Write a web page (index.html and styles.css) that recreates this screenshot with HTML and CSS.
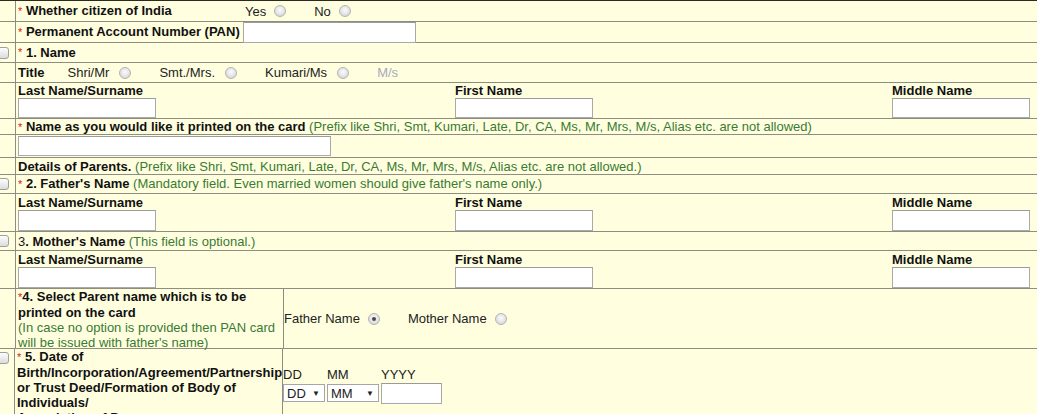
FILE: index.html
```html
<!DOCTYPE html>
<html>
<head>
<meta charset="utf-8">
<link rel="stylesheet" href="styles.css">
</head>
<body>
<div class="form">
  <div class="row r1">
    <div class="side"></div>
    <div class="main">
      <div class="lbl"><span class="req">*</span> <b>Whether citizen of India</b></div>
      <div class="opts">Yes<span class="radio"></span>No<span class="radio"></span></div>
    </div>
  </div>
  <div class="row r2">
    <div class="side"></div>
    <div class="main">
      <div class="lbl"><span class="req">*</span> <b>Permanent Account Number (PAN)</b></div>
      <input class="txt pan" type="text">
    </div>
  </div>
  <div class="row r3">
    <div class="side"><span class="chk"></span></div>
    <div class="main"><span class="req">*</span>&nbsp;<b>1. Name</b></div>
  </div>
  <div class="row r4">
    <div class="side"></div>
    <div class="main">
      <b class="title">Title</b>
      <span class="opt first">Shri/Mr</span><span class="radio"></span>
      <span class="opt">Smt./Mrs.</span><span class="radio"></span>
      <span class="opt">Kumari/Ms</span><span class="radio"></span>
      <span class="opt dis">M/s</span>
    </div>
  </div>
  <div class="row r5">
    <div class="side"></div>
    <div class="main names">
      <div class="nm"><b>Last Name/Surname</b><input class="txt nmi" type="text"></div>
      <div class="nm"><b>First Name</b><input class="txt nmi" type="text"></div>
      <div class="nm"><b>Middle Name</b><input class="txt nmi" type="text"></div>
    </div>
  </div>
  <div class="row r6">
    <div class="side"></div>
    <div class="main"><span><span class="req">*</span> <b>Name as you would like it printed on the card</b> <span class="note">(Prefix like Shri, Smt, Kumari, Late, Dr, CA, Ms, Mr, Mrs, M/s, Alias etc. are not allowed)</span></span></div>
  </div>
  <div class="row r7">
    <div class="side"></div>
    <div class="main"><input class="txt card" type="text"></div>
  </div>
  <div class="row r8">
    <div class="side"></div>
    <div class="main"><span><b>Details of Parents.</b> <span class="note">(Prefix like Shri, Smt, Kumari, Late, Dr, CA, Ms, Mr, Mrs, M/s, Alias etc. are not allowed.)</span></span></div>
  </div>
  <div class="row r9">
    <div class="side"><span class="chk"></span></div>
    <div class="main"><span><span class="req">*</span> <b>2. Father's Name</b> <span class="note">(Mandatory field. Even married women should give father's name only.)</span></span></div>
  </div>
  <div class="row r10">
    <div class="side"></div>
    <div class="main names">
      <div class="nm"><b>Last Name/Surname</b><input class="txt nmi" type="text"></div>
      <div class="nm"><b>First Name</b><input class="txt nmi" type="text"></div>
      <div class="nm"><b>Middle Name</b><input class="txt nmi" type="text"></div>
    </div>
  </div>
  <div class="row r11">
    <div class="side"><span class="chk"></span></div>
    <div class="main"><span>3<b>. Mother's Name</b> <span class="note">(This field is optional.)</span></span></div>
  </div>
  <div class="row r12">
    <div class="side"></div>
    <div class="main names">
      <div class="nm"><b>Last Name/Surname</b><input class="txt nmi" type="text"></div>
      <div class="nm"><b>First Name</b><input class="txt nmi" type="text"></div>
      <div class="nm"><b>Middle Name</b><input class="txt nmi" type="text"></div>
    </div>
  </div>
  <div class="row r13">
    <div class="side"></div>
    <div class="left"><span class="req">*</span><b>4. Select Parent name which is to be<br>printed on the card</b><br><span class="note">(In case no option is provided then PAN card<br>will be issued with father's name)</span></div>
    <div class="right">
      <span class="opt">Father Name</span><span class="radio on"></span>
      <span class="opt">Mother Name</span><span class="radio"></span>
    </div>
  </div>
  <div class="row r14">
    <div class="side top"><span class="chk"></span></div>
    <div class="left"><span class="req">*</span> <b>5. Date of<br>Birth/Incorporation/Agreement/Partnership<br>or Trust Deed/Formation of Body of<br>Individuals/<br>Association of Persons</b></div>
    <div class="right">
      <div class="dob">
        <div class="dcol"><span>DD</span><span class="sel dd">DD<i>▼</i></span></div>
        <div class="dcol"><span>MM</span><span class="sel mm">MM<i>▼</i></span></div>
        <div class="dcol"><span>YYYY</span><input class="txt yy" type="text"></div>
      </div>
    </div>
  </div>
</div>
</body>
</html>
```

FILE: styles.css
```css
html, body {
  margin: 0;
  padding: 0;
  overflow: hidden;
}
body {
  width: 1037px;
  height: 414px;
  background: #ffffe0;
  font: 13px/15px "Liberation Sans", Arial, sans-serif;
  color: #1c1c1c;
}
b { font-weight: bold; color: #111; }
.form {
  width: 1345px;
  margin-left: -8px;
  background: #ffffe0;
  border-top: 1px solid #2a2a22;
}
.row {
  display: flex;
  border-bottom: 1px solid #8e8e80;
}
.side {
  width: 23px;
  flex: none;
  border-right: 1px solid #8e8e80;
  display: flex;
  align-items: center;
}
.side.top { align-items: flex-start; padding-top: 3px; box-sizing: border-box; }
.main {
  flex: 1;
  padding: 0 2px;
  display: flex;
  align-items: center;
  white-space: nowrap;
}
.req {
  color: #e01010;
  font-size: 11px;
}
.note { color: #3a7a33; }
.lbl { width: 226px; flex: none; }
.opts { padding-left: 1px; display: flex; align-items: center; }
.opts .radio { margin-left: 8px; }

.radio {
  display: inline-block;
  width: 12px;
  height: 12px;
  box-sizing: border-box;
  border-radius: 50%;
  border: 1px solid #b4b4b4;
  background: radial-gradient(circle at 50% 40%, #fbfbfb 0, #e8e8e8 45%, #cdcdcd 100%);
  margin: 0 28px 0 10px;
  position: relative;
  flex: none;
}
.radio.on::after {
  content: "";
  position: absolute;
  left: 3px;
  top: 3px;
  width: 4px;
  height: 4px;
  border-radius: 50%;
  background: #4a4a4a;
}
.chk {
  display: inline-block;
  width: 13px;
  height: 12px;
  box-sizing: border-box;
  margin-left: 4px;
  border: 1px solid #a0a0a0;
  border-radius: 3px;
  background: linear-gradient(#fdfdfd, #dcdcdc);
}
.txt {
  display: block;
  box-sizing: border-box;
  margin: 0;
  padding: 0;
  border: 1px solid #a9a9a9;
  border-top-color: #9a9a9a;
  background: #fff;
  height: 20px;
  font: inherit;
}
.r1 { height: 20px; }
.r2 { height: 20px; }
.r2 .lbl { width: 225px; }
.pan { width: 173px; height: 21px; }
.r3 { height: 19px; }
.r4 { height: 19px; }
.title { margin-right: 23px; }
.opt { color: #222; }
.dis { color: #a8a8bc; }
.names {
  display: grid;
  grid-template-columns: 437px 437px 437px;
  align-items: start;
}
.nm b { display: block; }
.nmi { width: 138px; }
.r5 { height: 35px; }
.r6 { height: 15px; }
.r7 { height: 22px; }
.card { width: 313px; }
.r8 { height: 16px; }
.r9 { height: 18px; }
.r10 { height: 37px; }
.r10 .nm b, .r12 .nm b { margin-top: 1px; }
.r10 .nmi, .r12 .nmi { height: 21px; }
.r11 { height: 18px; }
.r12 { height: 37px; }
.r13 { height: 59px; }
.left {
  width: 264px;
  flex: none;
  padding: 0 1px 0 2px;
  border-right: 1px solid #8e8e80;
  white-space: nowrap;
}
.r13 .left { overflow: visible; }
.r14 .left { overflow: hidden; }
.right {
  flex: 1;
  padding-left: 0;
  display: flex;
  align-items: center;
}
.right .radio { margin-left: 8px; margin-right: 28px; }
.r14 { height: 76px; }
.r14 .right { align-items: flex-start; padding-top: 18px; box-sizing: border-box; }
.dob { display: flex; gap: 2px; }
.dcol { display: flex; flex-direction: column; align-items: flex-start; color: #222; }
.dcol span:first-child { height: 16px; }
.sel {
  display: flex;
  align-items: center;
  justify-content: space-between;
  box-sizing: border-box;
  height: 18px;
  margin-top: 1px;
  border: 1px solid #a6a6a6;
  background: #fff;
  padding: 0 4px 0 3px;
  color: #222;
}
.sel i { font-style: normal; font-size: 8px; }
.dd { width: 42px; }
.mm { width: 52px; }
.yy { width: 61px; height: 21px; }
```
